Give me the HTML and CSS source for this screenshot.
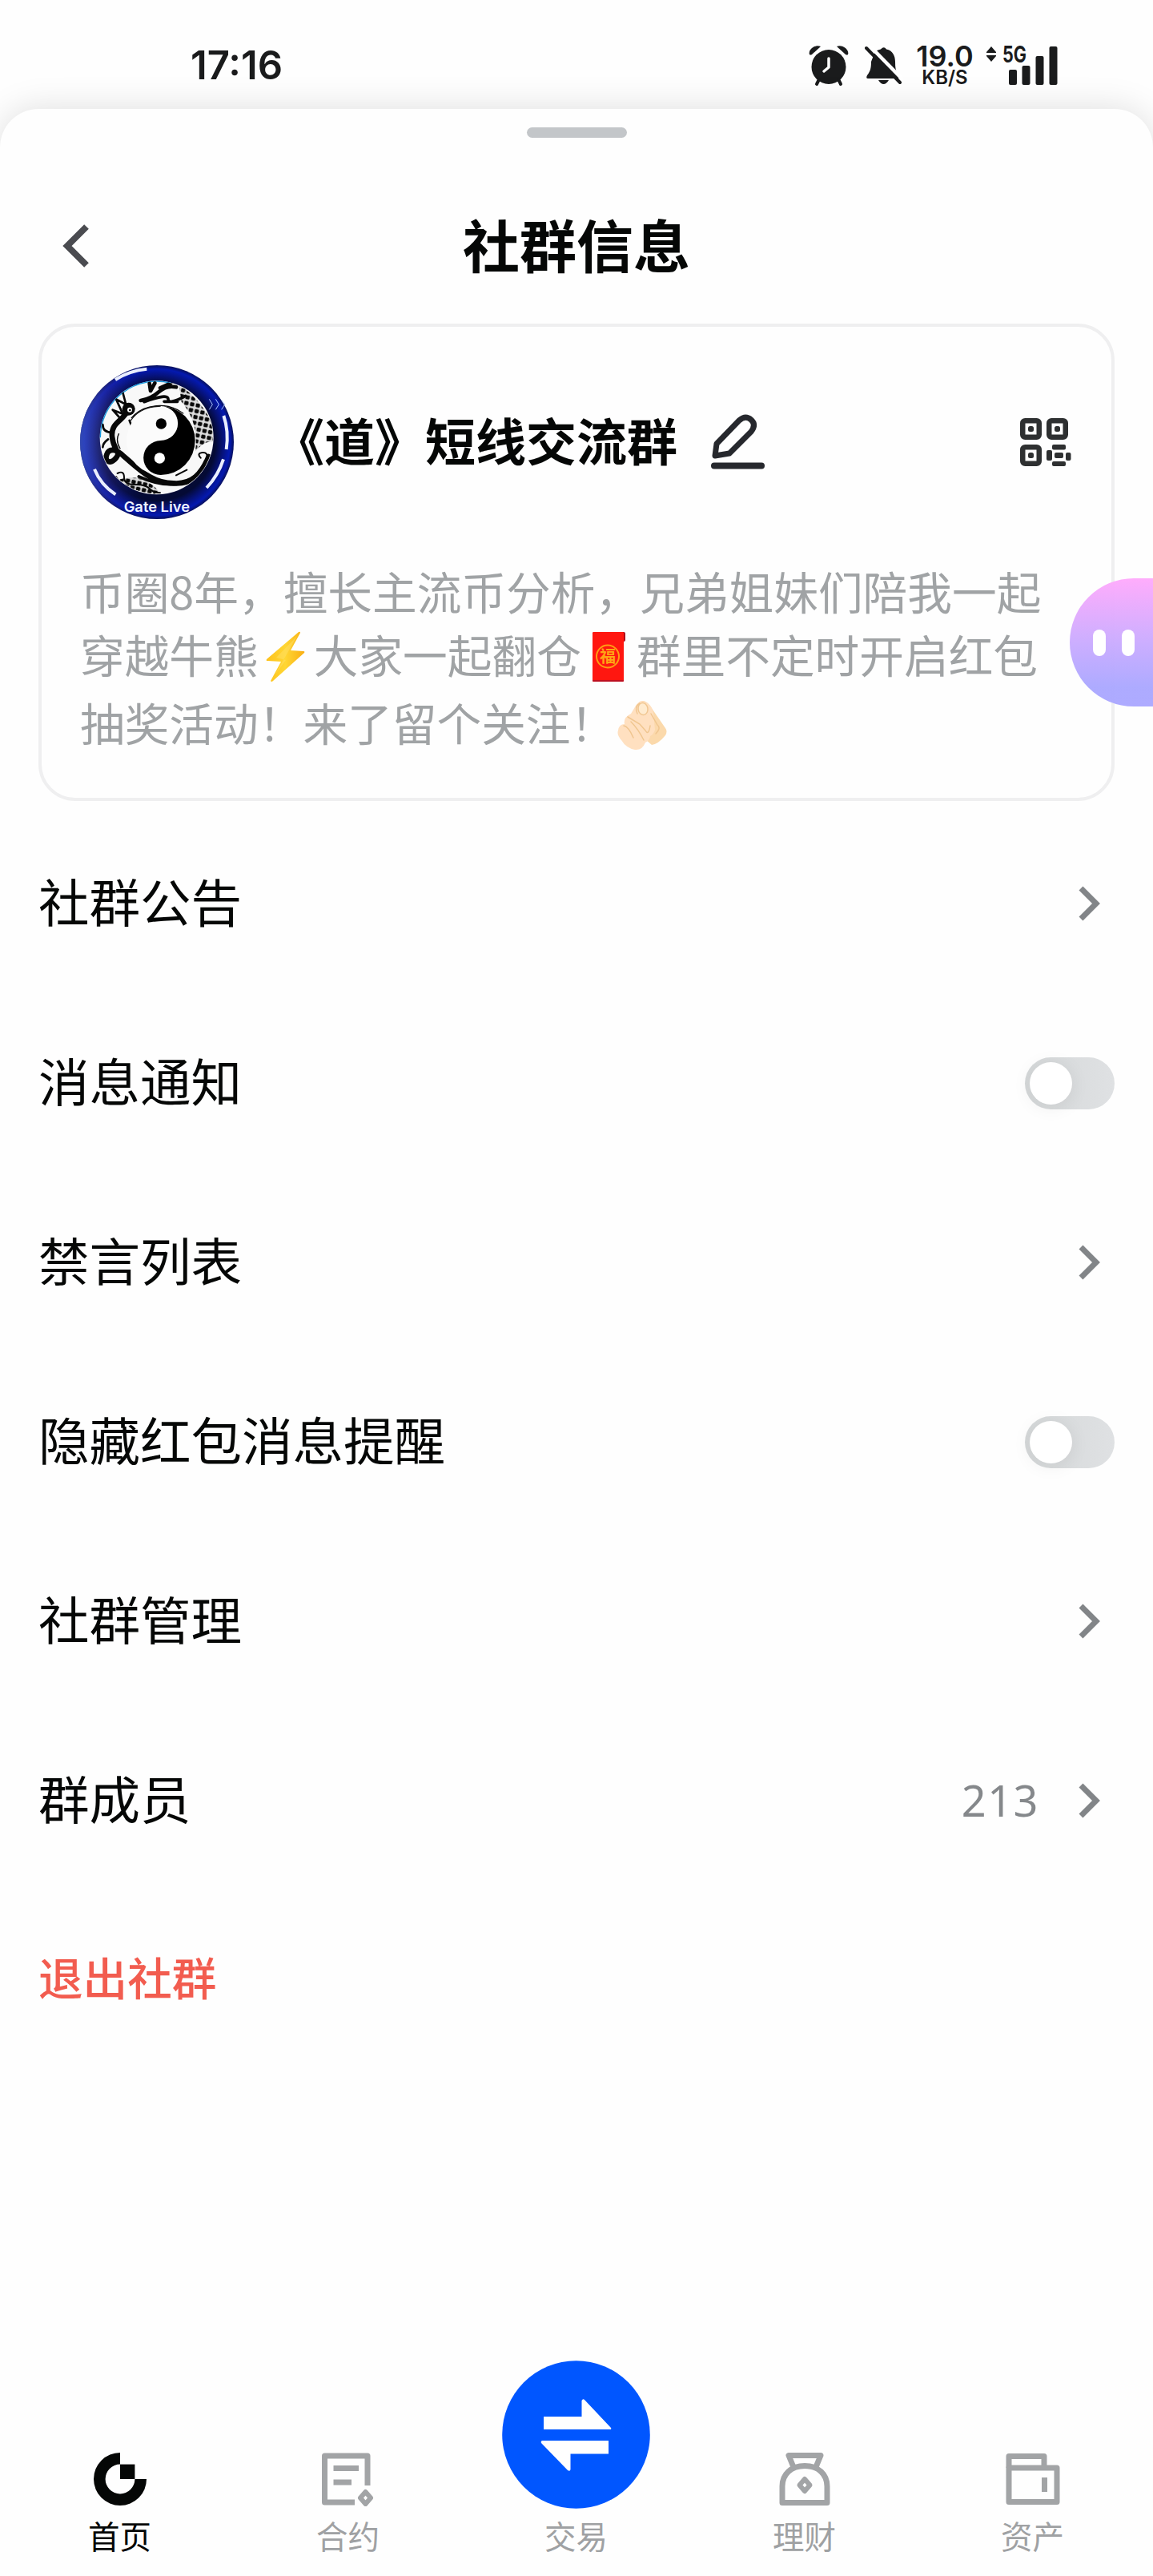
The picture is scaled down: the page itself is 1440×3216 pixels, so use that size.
FILE: index.html
```html
<!DOCTYPE html>
<html lang="zh-CN">
<head>
  <meta charset="UTF-8" />
  <meta name="viewport" content="width=device-width, initial-scale=1.0"/>
  <title>社群信息</title>
  <link rel="stylesheet" href="styles.css">
</head>
<body>

  <div class="status-bar">
    <div class="status-time">17:16</div>
    <div class="status-icons">
      <svg class="icon-alarm" width="50" height="52" viewBox="0 0 50 52">
        <g fill="#1a1b1c">
          <circle cx="25" cy="27.500" r="21.500"/>
          <path d="M1 12C-1 6 8-1 15 2L4 12Q2 13 1 12Z"/>
          <path d="M49 12C51 6 42-1 35 2L46 12Q48 13 49 12Z"/>
        </g>
        <path d="M13 43L10 49M37 43L40 49" stroke="#1a1b1c" stroke-width="4" stroke-linecap="round"/>
        <path d="M25 17V28L19 33" fill="none" stroke="#fff" stroke-width="3.500" stroke-linecap="round" stroke-linejoin="round"/>
      </svg>
      <svg class="icon-mute" width="48" height="50" viewBox="0 0 48 50">
        <g fill="#1a1b1c">
          <path d="M13 7Q17 5 20 4.500Q24 0 27 4.500C35 6 38 13 38 20Q38 30 40 33Q42 36 44 38L42 41H4Q1 41 3 37C7 32 8 28 8 20Z"/>
          <path d="M17 43H30Q27 48 23.500 48T17 43Z"/>
        </g>
        <path d="M4-2L49 44" stroke="#fff" stroke-width="4.500"/>
        <path d="M2 3L44 46" stroke="#1a1b1c" stroke-width="4" stroke-linecap="round"/>
      </svg>
      <div class="net-speed">
        <span class="speed-value">19.0</span>
        <span class="speed-unit">KB/S</span>
      </div>
      <svg class="icon-signal" width="92" height="52" viewBox="0 0 92 52">
        <g fill="#1a1b1c">
          <path d="M7 1L13 8V9H1V8ZM7 20L13 13V12H1V13Z"/>
          <rect x="29" y="30" width="10" height="19" rx="2"/>
          <rect x="45.500" y="25" width="10" height="24" rx="2"/>
          <rect x="62.500" y="13" width="10" height="36" rx="2"/>
          <rect x="79.500" y="1" width="10" height="48" rx="2"/>
          <text x="21" y="21" class="signal-label" textLength="30" lengthAdjust="spacingAndGlyphs">5G</text>
        </g>
      </svg>
    </div>
  </div>

  <div class="sheet">
    <div class="sheet-handle"></div>

    <div class="sheet-header">
      <svg class="back-icon" width="36" height="56" viewBox="0 0 36 56">
        <path d="M31 4L7 28L31 52" fill="none" stroke="#4a4b50" stroke-width="8"/>
      </svg>
      <h1 class="page-title">社群信息</h1>
    </div>

    <div class="group-card">
      <div class="group-head">
        <svg class="avatar" width="192" height="192" viewBox="60 78 576 576">
          <defs>
            <radialGradient id="ring" cx="50%" cy="50%" r="50%">
              <stop offset="76%" stop-color="#040a34"/>
              <stop offset="86%" stop-color="#061278"/>
              <stop offset="95%" stop-color="#0419b0"/>
              <stop offset="100%" stop-color="#07105c"/>
            </radialGradient>
            <linearGradient id="side" x1="0" x2="1" y1="0" y2="0">
              <stop offset="0" stop-color="#3c57c8" stop-opacity=".8"/>
              <stop offset=".2" stop-color="#35309a" stop-opacity=".35"/>
              <stop offset=".4" stop-color="#0419b4" stop-opacity="0"/>
            </linearGradient>
            <pattern id="scales" width="22" height="22" patternUnits="userSpaceOnUse" patternTransform="rotate(12)">
              <rect width="22" height="22" fill="#ddd"/>
              <rect x="2" y="2" width="16" height="15" rx="4" fill="#0a0a0a"/>
            </pattern>
            <clipPath id="inner"><circle cx="347" cy="349" r="211"/></clipPath>
          </defs>
          <circle cx="348" cy="366" r="288" fill="url(#ring)"/>
          <circle cx="348" cy="366" r="288" fill="url(#side)"/>
          <circle cx="347" cy="349" r="213" fill="#f8f8f8"/>
          <path d="M136 349A211 211 0 0 1 400 145" fill="none" stroke="#159adf" stroke-width="4"/>
          <g clip-path="url(#inner)">
            <path d="M430 150Q505 200 550 285L570 370Q535 350 492 400Q505 290 440 215Z" fill="url(#scales)"/>
            <path d="M195 510Q290 475 355 550L310 580Z" fill="url(#scales)"/>
            <g fill="none" stroke="#080808" stroke-linecap="round" stroke-linejoin="round">
              <path d="M240 245C225 285 175 290 180 345S215 400 195 425S150 440 160 412S200 395 225 420C285 470 330 520 410 520C480 525 515 485 542 420" stroke-width="20"/>
              <path d="M280 495Q380 540 455 515T555 450" stroke-width="11"/>
              <path d="M220 180L232 225L195 205L220 260L182 245L215 282M180 330Q145 330 145 300M165 355Q145 370 145 385M245 285L255 310" stroke-width="8"/>
              <path d="M287 210Q325 205 355 178T420 160M320 146L324 174L340 145M360 163L400 145" stroke-width="14"/>
              <path d="M300 215Q390 182 390 205T455 193M375 214H425" stroke-width="11"/>
              <path d="M536 430Q540 402 518 405T512 425M510 475Q535 455 553 430M200 483Q225 470 225 498T265 525T320 540T360 556M195 495Q215 535 260 545M420 490L460 470" stroke-width="6"/>
              <path d="M253 275C300 220 390 215 446 258M205 335Q192 360 210 390" stroke-width="4"/>
            </g>
            <circle cx="242" cy="242" r="24" fill="#080808"/>
            <circle cx="246" cy="245" r="9" fill="#fff"/>
            <circle cx="247" cy="246" r="4"/>
            <circle cx="362" cy="360" r="128" fill="#fbfbfb"/>
            <path d="M362 231A129 129 0 0 1 362 489A64.500 64.500 0 0 1 362 360A64.500 64.500 0 0 0 362 231Z"/>
            <path d="M250 285Q285 232 362 231" fill="none" stroke="#111" stroke-width="4"/>
            <circle cx="364" cy="297" r="20"/>
            <circle cx="358" cy="426" r="20" fill="#fff"/>
          </g>
          <g fill="none" stroke="#e9eeff" stroke-width="12">
            <path d="M192 132Q245 98 310 92"/>
            <path d="M598 267Q618 325 608 393"/>
            <path d="M597 430Q578 490 534 537"/>
            <path d="M114 467Q137 525 193 562"/>
          </g>
          <path d="M544 205L556 225L544 244M568 205L580 225L568 244M590 208L602 225L590 244" fill="none" stroke="#a9c5ff" stroke-width="3"/>
          <text class="avatar-text" x="224" y="628" textLength="247" lengthAdjust="spacingAndGlyphs">Gate Live</text>
        </svg>
        <div class="group-name">《道》短线交流群</div>
        <svg class="edit-icon" width="70" height="70" viewBox="0 0 70 70">
          <path d="M8 37L36 8Q44 1 51 7T51 22L24 49L6 52Z" fill="none" stroke="#26282d" stroke-width="7" stroke-linejoin="round"/>
          <rect x="1" y="60.500" width="67" height="8" rx="4" fill="#26282d"/>
        </svg>
        <svg class="qr-icon" width="64" height="60" viewBox="0 0 64 60">
          <g fill="none" stroke="#2e3031" stroke-width="6.500">
            <rect x="3.250" y="3.250" width="20.500" height="20.500" rx="3"/>
            <rect x="36.250" y="3.250" width="20.500" height="20.500" rx="3"/>
            <rect x="3.250" y="36.250" width="20.500" height="20.500" rx="3"/>
          </g>
          <g fill="#2e3031">
            <rect x="10" y="10" width="7" height="7" rx="2.500"/>
            <rect x="43" y="10" width="7" height="7" rx="2.500"/>
            <rect x="10" y="43" width="7" height="7" rx="2.500"/>
            <rect x="40" y="33" width="17" height="6.500" rx="2"/>
            <rect x="33" y="40" width="7" height="13" rx="2"/>
            <rect x="57" y="43" width="6.500" height="10" rx="2"/>
            <rect x="40" y="54" width="17" height="6" rx="2"/>
            <rect x="43" y="43" width="11" height="7" rx="2"/>
          </g>
        </svg>
      </div>

      <div class="group-desc">
        <div class="desc-line">币圈8年，擅长主流币分析，兄弟姐妹们陪我一起</div>
        <div class="desc-line">穿越牛熊<svg class="emoji" width="69" height="64" viewBox="0 0 69 64">
            <defs><linearGradient id="bolt" x1="0" x2="1" y1="0" y2="0"><stop offset="0" stop-color="#fdc11c"/><stop offset=".5" stop-color="#ffd633"/><stop offset="1" stop-color="#f9ae14"/></linearGradient></defs>
            <path d="M50 1L10 35Q9 37 11 37L28 38L15 62Q16 64 18 62L57 27Q58 25 56 25L40 24L52 2Q52 0 50 1Z" fill="url(#bolt)"/>
            <path d="M48 6L31 36L20 55L34 36L22 33Z" fill="#ffe066" opacity=".5"/>
          </svg>大家一起翻仓<svg class="emoji" width="69" height="64" viewBox="0 0 69 64">
            <rect x="14" y="1" width="41" height="12" rx="2" fill="#b00a18"/>
            <rect x="14" y="1" width="39" height="62" rx="1.500" fill="#ff1710"/>
            <path d="M14 61H53V62Q53 63 51 63H16Q14 63 14 62Z" fill="#bd1020"/>
            <circle cx="33" cy="31.500" r="14" fill="none" stroke="#ff9d12" stroke-width="2"/>
            <text class="emoji-fu" x="33" y="39" text-anchor="middle">福</text>
          </svg>群里不定时开启红包</div>
        <div class="desc-line desc-line-last">抽奖活动！来了留个关注！<svg class="emoji" width="69" height="64" viewBox="0 0 69 64">
            <path d="M29 5Q35-2 43 7L63 36Q66 40 63 45Q54 56 46 57L38 50Z" fill="#fbd9ab"/>
            <path d="M20 18L26 8Q32-1 39 4Q46 7 48 17L50 38Q49 43 44 46Q43 52 38 54Q34 64 25 63Q14 61 8 51Q2 44 4 39Q5 31 12 31Q10 23 20 18Z" fill="#ffe0c0"/>
            <path d="M28 18Q24 9 31 5M16 22L31 31L38 39Q42 46 44 33M11 33Q17 34 23 48M20 28Q29 37 36 51M45 18L53 32Q58 36 51 43" fill="none" stroke="#f0c690" stroke-width="1.500" stroke-linecap="round"/>
            <ellipse cx="35" cy="12" rx="6" ry="7.500" transform="rotate(-10 35 12)" fill="#ffebcf" stroke="#f0c690" stroke-width="1.500"/>
          </svg></div>
      </div>
    </div>

    <div class="menu">
      <div class="menu-row">
        <span class="row-label">社群公告</span>
        <svg class="row-arrow" width="28" height="44" viewBox="0 0 28 44"><path d="M3 3L22 22L3 41" fill="none" stroke="#828588" stroke-width="7"/></svg>
      </div>
      <div class="menu-row">
        <span class="row-label">消息通知</span>
        <span class="toggle"><span class="toggle-knob"></span></span>
      </div>
      <div class="menu-row">
        <span class="row-label">禁言列表</span>
        <svg class="row-arrow" width="28" height="44" viewBox="0 0 28 44"><path d="M3 3L22 22L3 41" fill="none" stroke="#828588" stroke-width="7"/></svg>
      </div>
      <div class="menu-row">
        <span class="row-label">隐藏红包消息提醒</span>
        <span class="toggle"><span class="toggle-knob"></span></span>
      </div>
      <div class="menu-row">
        <span class="row-label">社群管理</span>
        <svg class="row-arrow" width="28" height="44" viewBox="0 0 28 44"><path d="M3 3L22 22L3 41" fill="none" stroke="#828588" stroke-width="7"/></svg>
      </div>
      <div class="menu-row">
        <span class="row-label">群成员</span>
        <span class="row-count">213</span>
        <svg class="row-arrow" width="28" height="44" viewBox="0 0 28 44"><path d="M3 3L22 22L3 41" fill="none" stroke="#828588" stroke-width="7"/></svg>
      </div>
      <div class="menu-row">
        <span class="row-label row-exit">退出社群</span>
      </div>
    </div>

    <div class="tab-bar">
      <div class="tab tab-active">
        <svg width="68" height="68" viewBox="0 0 68 68">
          <path d="M34 1A33 33 0 1 0 67 34H52.400A18.400 18.400 0 1 1 34 15.600Z" fill="#050706"/>
          <rect x="34" y="15.600" width="18.400" height="18.400" fill="#050706"/>
        </svg>
        <span class="tab-label">首页</span>
      </div>
      <div class="tab">
        <svg width="68" height="68" viewBox="0 0 68 68">
          <g fill="none" stroke="#a2a4a6" stroke-width="7" stroke-linejoin="round">
            <path d="M42 63H4.500V5H58V42"/>
            <path d="M15.500 20.500H47M15.500 38H38"/>
            <path d="M55.500 50L62 57.500L55.500 65L49 57.500Z" stroke-width="6"/>
          </g>
        </svg>
        <span class="tab-label">合约</span>
      </div>
      <div class="tab tab-trade">
        <svg width="185" height="185" viewBox="0 0 185 185">
          <circle cx="92.500" cy="92.500" r="92.300" fill="#0056ff"/>
          <path d="M52 70H99.500V50Q101 47 103 49L136 84Q137 86 135 86H52Z" fill="#fff"/>
          <path d="M133 100H50Q48 101 49 103L82 137Q85 139 85.500 136V116.500H133Z" fill="#fff"/>
        </svg>
        <span class="tab-label">交易</span>
      </div>
      <div class="tab">
        <svg width="68" height="68" viewBox="0 0 68 68">
          <g fill="none" stroke="#a2a4a6" stroke-width="7" stroke-linejoin="round">
            <path d="M20 19L14 4.500H54L48 19"/>
            <path d="M6 63.500V43C6 28 17 17.500 34 17.500S62 28 62 43V63.500Z"/>
            <path d="M34 34L40.500 41.500L34 49L27.500 41.500Z" stroke-width="6"/>
          </g>
        </svg>
        <span class="tab-label">理财</span>
      </div>
      <div class="tab">
        <svg width="68" height="68" viewBox="0 0 68 68">
          <g fill="none" stroke="#a2a4a6" stroke-width="7" stroke-linejoin="round">
            <path d="M4 20V5.500H48V20"/>
            <path d="M4 20H64V62.500H4Z"/>
            <path d="M48.500 32V50"/>
          </g>
        </svg>
        <span class="tab-label">资产</span>
      </div>
    </div>
  </div>

  <!-- floating assistant, docked at the screen edge -->
  <div class="assistant">
    <span class="eye"></span>
    <span class="eye"></span>
  </div>

</body>
</html>
```
FILE: styles.css
```css
* {
  box-sizing: border-box;
}

body {
  font-family: "Noto Sans CJK SC", "Noto Sans", sans-serif;
  background-color: #fefefe;
  color: #050706;
  margin: 0;
  width: 1440px;
  height: 3216px;
  position: relative;
  overflow: hidden;
  display: flex;
  flex-direction: column;
}

svg {
  display: block;
  flex-shrink: 0;
}

.status-bar {
  height: 136px;
  padding: 56px 117px 0 238px;
  display: flex;
  justify-content: space-between;
  align-items: flex-start;
  color: #1a1b1c;
  font-family: Inter, "Liberation Sans", sans-serif;
}

.status-time {
  font-size: 49px;
  line-height: 52px;
  font-weight: 600;
}

.status-icons {
  display: flex;
  align-items: flex-start;
}

.icon-mute {
  margin: 1px 0 0 20px;
}

.net-speed {
  width: 76px;
  margin: -1px 13px 0 14px;
  display: flex;
  flex-direction: column;
  align-items: center;
  font-weight: 600;
}

.speed-value {
  font-size: 36px;
  line-height: 30px;
}

.speed-unit {
  font-size: 24px;
  line-height: 24px;
}

.icon-signal {
  margin-top: 1px;
  overflow: visible;
}

.signal-label {
  font-size: 28px;
  font-weight: 700;
}

.sheet {
  flex: 1;
  background-color: #fefefe;
  border-radius: 48px 48px 0 0;
  box-shadow: 0 0 44px rgba(0, 0, 0, 0.13);
  padding-top: 23px;
  display: flex;
  flex-direction: column;
}

.sheet-handle {
  width: 125px;
  height: 13px;
  border-radius: 7px;
  background-color: #c3c6c9;
  margin: 0 auto;
}

.sheet-header {
  height: 232px;
  padding: 38px 76px 0 77px;
  display: flex;
  align-items: center;
}

.page-title {
  flex: 1;
  margin: 0 37px 0 0;
  padding-bottom: 8px;
  font-size: 71px;
  line-height: 90px;
  font-weight: 700;
  text-align: center;
}

.group-card {
  height: 596px;
  margin: 0 48px;
  padding: 48px;
  border: 4px solid #efeff0;
  border-radius: 46px;
}

.group-head {
  height: 192px;
  display: flex;
  align-items: center;
}

.avatar-text {
  font-family: Inter, sans-serif;
  font-size: 51px;
  font-weight: 600;
  fill: #f0f4ff;
}

.group-name {
  margin-left: 50px;
  padding-bottom: 9px;
  font-size: 63px;
  line-height: 80px;
  font-weight: 700;
  white-space: nowrap;
}

.edit-icon {
  margin-left: 41px;
}

.qr-icon {
  margin-left: auto;
  margin-right: 2px;
}

.group-desc {
  padding-top: 49px;
  font-size: 55.700px;
  color: #a0a3a5;
}

.desc-line {
  height: 79px;
  display: flex;
  align-items: center;
  line-height: 79px;
  white-space: nowrap;
}

.desc-line-last {
  height: 91px;
}

.emoji {
  margin-top: 8px;
}

.emoji-fu {
  font-size: 20px;
  font-weight: 700;
  fill: #ffa514;
}

.menu {
  padding: 16px 48px 0;
}

.menu-row {
  height: 224px;
  display: flex;
  align-items: center;
}

.row-label {
  flex: 1;
  padding-bottom: 11px;
  font-size: 63.500px;
  line-height: 90px;
}

.row-exit {
  font-size: 55.600px;
  font-weight: 500;
  color: #f25c4f;
}

.row-count {
  padding-bottom: 3px;
  margin-right: 49px;
  font-family: "Noto Sans", sans-serif;
  font-size: 54px;
  line-height: 80px;
  letter-spacing: 1.500px;
  color: #85888b;
}

.row-arrow {
  margin-right: 17px;
}

.toggle {
  width: 112px;
  height: 65px;
  padding: 6px;
  border-radius: 33px;
  background: linear-gradient(90deg, #d5d8d9, #dfe1e3);
}

.toggle-knob {
  display: block;
  width: 53px;
  height: 53px;
  border-radius: 50%;
  background-color: #fff;
  box-shadow: 0 3px 24px rgba(0, 0, 0, 0.07);
}

.tab-bar {
  margin-top: auto;
  padding: 0 8px 22px 7px;
  display: flex;
  align-items: flex-end;
}

.tab {
  flex: 1;
  display: flex;
  flex-direction: column;
  align-items: center;
  gap: 7px;
  color: #9fa1a3;
}

.tab-active {
  color: #050706;
}

.tab-trade {
  gap: 4px;
}

.tab-label {
  font-size: 39.500px;
  line-height: 58px;
}

.assistant {
  position: absolute;
  top: 722px;
  right: 0;
  width: 104px;
  height: 160px;
  padding-left: 29px;
  border-radius: 80px 0 0 80px;
  background: linear-gradient(180deg, rgba(255, 170, 252, 0.97), rgba(207, 172, 255, 0.97) 45%, rgba(171, 168, 255, 0.97) 85%);
  display: flex;
  align-items: center;
  gap: 20px;
}

.eye {
  width: 16px;
  height: 33px;
  border-radius: 8px;
  background-color: #fff;
}
```
